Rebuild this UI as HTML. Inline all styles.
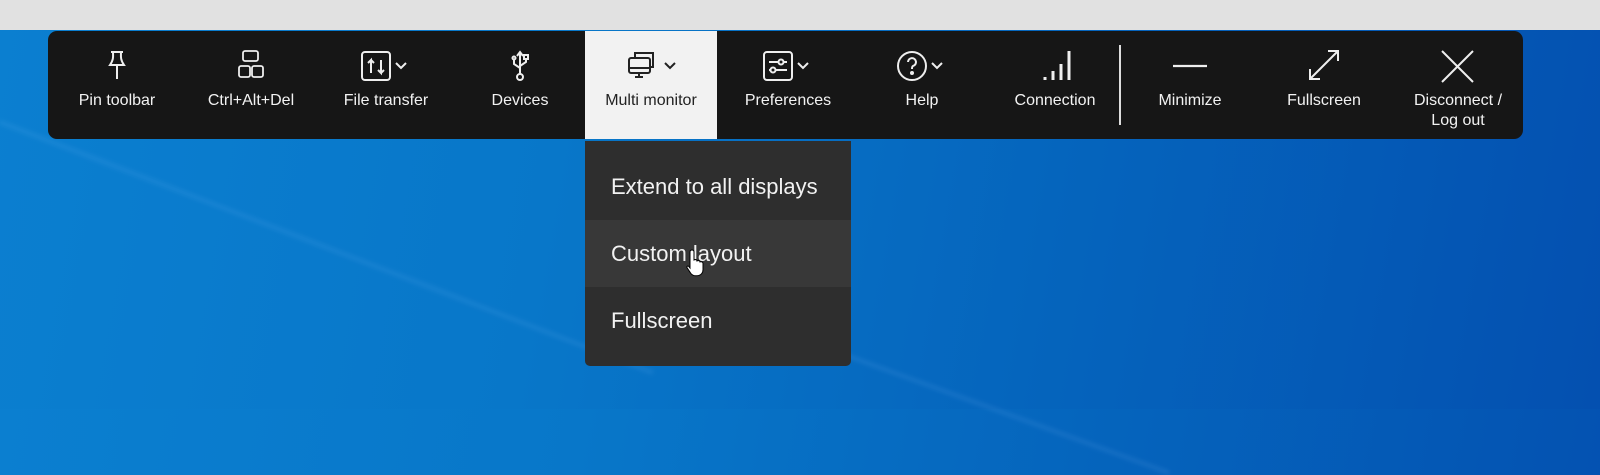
<!DOCTYPE html>
<html><head><style>
*{margin:0;padding:0;box-sizing:border-box}
body{width:1600px;height:409px;overflow:hidden;position:relative;font-family:"Liberation Sans",sans-serif;background:linear-gradient(100deg,#0b7fd0 0%,#0877c9 35%,#0565bd 65%,#0450b0 100%)}
.top{position:absolute;left:0;top:0;width:1600px;height:30px;background:#e1e1e1}
.streak{position:absolute;height:4px;background:rgba(140,200,255,.12);transform-origin:0 0;filter:blur(2px)}
.tb{position:absolute;left:48px;top:31px;width:1475px;height:108px;background:#161616;border-radius:9px}
.it{position:absolute;top:31px;width:134px;height:108px;color:#f2f2f2;text-align:center;font-size:16px;line-height:20px}
.it svg{position:absolute;left:50%;top:18px;transform:translateX(-50%)}
.it .l{position:absolute;left:0;right:0;top:60px}
.sel{background:#f2f2f2;color:#222}
.sep{position:absolute;left:1119px;top:45px;width:2px;height:80px;background:#ddd}
.menu{position:absolute;left:585px;top:141px;width:266px;height:225px;background:#2e2e2e;border-radius:0 0 5px 5px}
.mi{position:absolute;left:0;width:266px;height:67px;color:#f2f2f2;font-size:22px;line-height:67px;padding-left:26px}
</style></head><body>
<div class="top"></div>
<div class="streak" style="left:0;top:120px;width:700px;transform:rotate(21deg)"></div>
<div class="streak" style="left:700px;top:300px;width:500px;transform:rotate(20deg)"></div>
<div class="tb"></div>
<div class="it" style="left:50px"><svg width="40" height="36" viewBox="0 0 40 36" fill="none" stroke="#eee" stroke-width="2"><path d="M14 3h12M16 3c0 4 1 7-3 13h14c-4-6-3-9-3-13M20 16v14"/></svg><div class="l">Pin toolbar</div></div>
<div class="it" style="left:184px"><svg width="40" height="36" viewBox="0 0 40 36" fill="none" stroke="#eee" stroke-width="1.8"><rect x="12" y="2" width="15" height="10" rx="2"/><rect x="8" y="17" width="11" height="11" rx="2"/><rect x="21" y="17" width="11" height="11" rx="2"/></svg><div class="l">Ctrl+Alt+Del</div></div>
<div class="it" style="left:319px"><svg width="60" height="36" viewBox="0 0 60 36" fill="none" stroke="#eee" stroke-width="2"><rect x="6" y="3" width="28" height="28" rx="3"/><path d="M15 24V11l-3 3M15 11l3 3M25 11v13l-3-3M25 24l3-3M40 14l5 5 5-5"/></svg><div class="l">File transfer</div></div>
<div class="it" style="left:453px"><svg width="40" height="36" viewBox="0 0 40 36" fill="none" stroke="#eee" stroke-width="2"><path d="M20 3v22M17 7l3-4 3 4M20 19l-6-4v-5M20 17l6-4V9"/><circle cx="20" cy="28" r="3"/><circle cx="14" cy="9" r="1.5"/><rect x="24" y="6" width="4" height="4"/></svg><div class="l">Devices</div></div>
<div class="it sel" style="left:585px;width:132px"><svg width="60" height="36" viewBox="0 0 60 36" fill="none" stroke="#222" stroke-width="2"><path d="M14 8V4h18v14h-3"/><rect x="8" y="9" width="21" height="15" rx="2"/><path d="M8 19h21M18 24v4M14 28h8M44 14l5 5 5-5"/></svg><div class="l">Multi monitor</div></div>
<div class="it" style="left:721px"><svg width="60" height="36" viewBox="0 0 60 36" fill="none" stroke="#eee" stroke-width="2"><rect x="6" y="3" width="28" height="28" rx="3"/><path d="M11 13h18M11 21h18"/><circle cx="23" cy="13" r="2.5" fill="#161616"/><circle cx="15" cy="21" r="2.5" fill="#161616"/><path d="M40 14l5 5 5-5"/></svg><div class="l">Preferences</div></div>
<div class="it" style="left:855px"><svg width="60" height="36" viewBox="0 0 60 36" fill="none" stroke="#eee" stroke-width="2"><circle cx="20" cy="17" r="14"/><path d="M16 13a4 4 0 1 1 5 4c-1 .5-1 1.5-1 3"/><circle cx="20" cy="24" r="1" fill="#eee"/><path d="M40 14l5 5 5-5"/></svg><div class="l">Help</div></div>
<div class="it" style="left:988px"><svg width="40" height="36" viewBox="0 0 40 36" fill="none" stroke="#eee" stroke-width="3"><path d="M10 31v-3M18 31v-9M26 31v-16M34 31V2"/></svg><div class="l">Connection</div></div>
<div class="sep"></div>
<div class="it" style="left:1123px"><svg width="40" height="36" viewBox="0 0 40 36" fill="none" stroke="#eee" stroke-width="2.2"><path d="M3 17h34"/></svg><div class="l">Minimize</div></div>
<div class="it" style="left:1257px"><svg width="40" height="36" viewBox="0 0 40 36" fill="none" stroke="#eee" stroke-width="2"><path d="M6 30L34 2M24 2h10v10M6 20v10h10"/></svg><div class="l">Fullscreen</div></div>
<div class="it" style="left:1391px"><svg width="40" height="36" viewBox="0 0 40 36" fill="none" stroke="#eee" stroke-width="2"><path d="M4 2l31 31M35 2L4 33"/></svg><div class="l">Disconnect /<br>Log out</div></div>
<div class="menu">
<div class="mi" style="top:12px">Extend to all displays</div>
<div class="mi" style="top:79px;background:#383838">Custom layout</div>
<div class="mi" style="top:146px">Fullscreen</div>
</div>
<svg style="position:absolute;left:686px;top:248px" width="22" height="30" viewBox="0 0 22 30"><path d="M6 2c1.5 0 2 1 2 2v8l1-.5c1 0 2 .5 2 1.5l1-.5c1 0 2 .5 2 1.5l1-.3c1.5 0 2 1 2 2v6c0 3-2 6-6 6H9c-2 0-3-1-4-2l-4-6c-.5-1 .5-2 1.5-1.5L4 20V4c0-1 .5-2 2-2z" fill="#fff" stroke="#000" stroke-width="1"/></svg>
</body></html>
